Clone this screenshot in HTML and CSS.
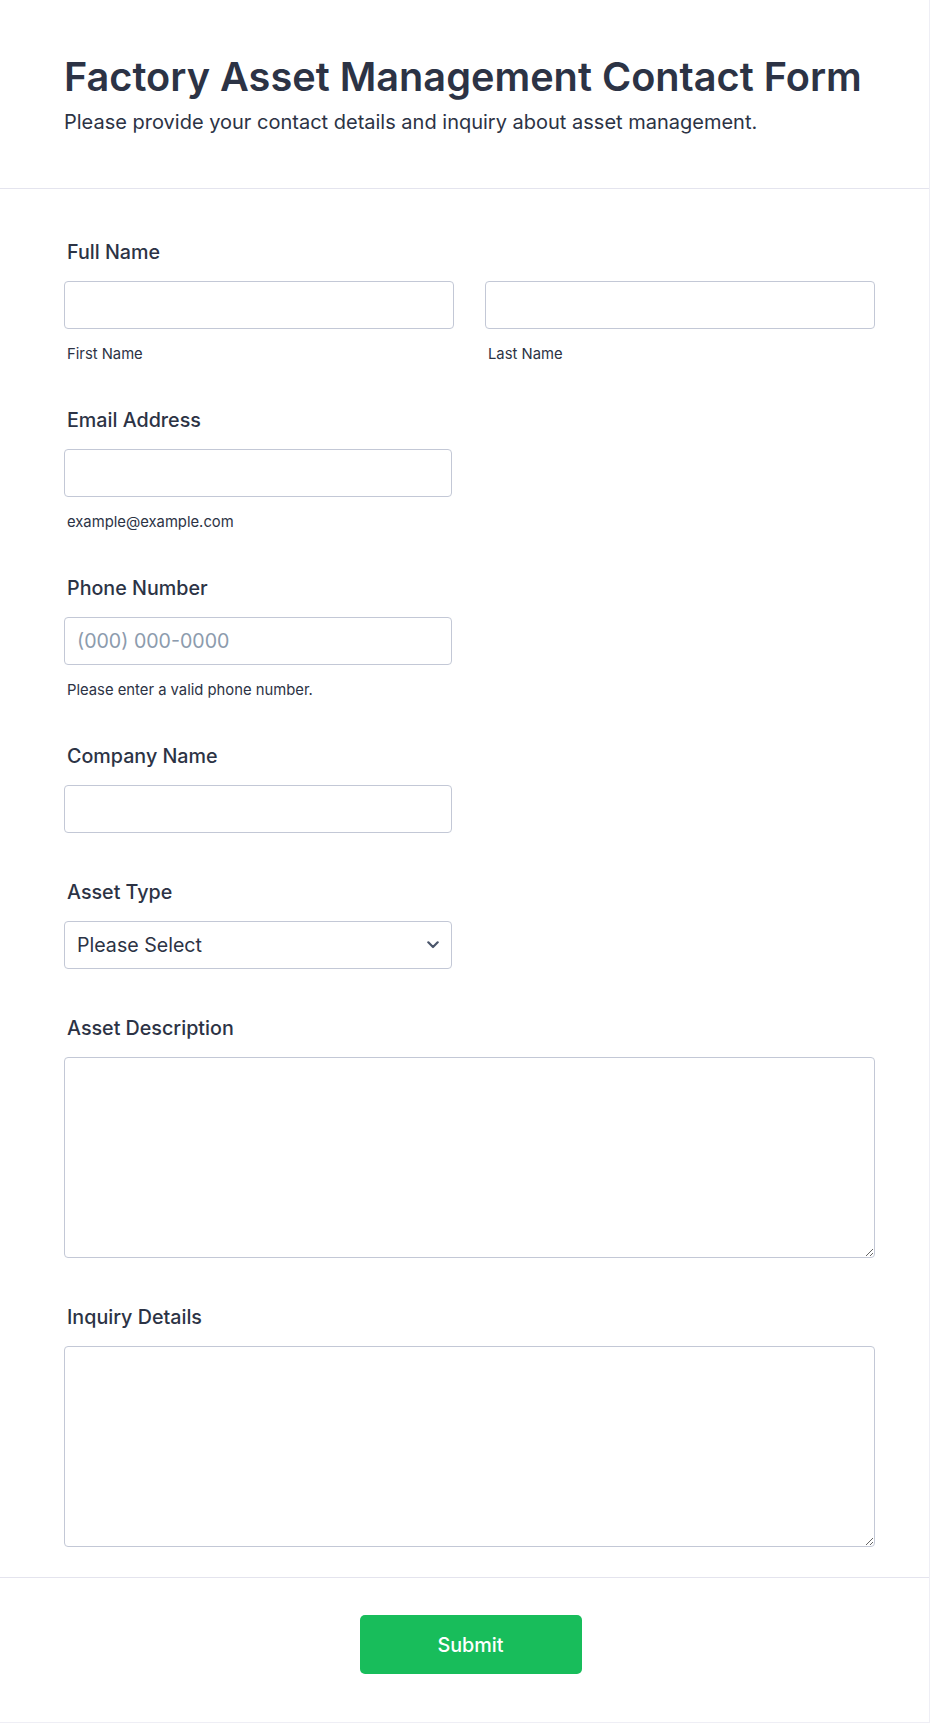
FILE: index.html
```html
<!DOCTYPE html>
<html lang="en">
<head>
<meta charset="utf-8">
<title>Factory Asset Management Contact Form</title>
<link rel="stylesheet" href="styles.css">
</head>
<body>
<div class="page">
  <header class="header">
    <h1 class="title">Factory Asset Management Contact Form</h1>
    <p class="subtitle">Please provide your contact details and inquiry about asset management.</p>
  </header>
  <form class="form">
    <div class="fields">
      <div class="field with-sub">
        <label class="label">Full Name</label>
        <div class="name-row">
          <div class="name-col">
            <input class="input" type="text">
            <span class="sublabel">First Name</span>
          </div>
          <div class="name-col">
            <input class="input" type="text">
            <span class="sublabel">Last Name</span>
          </div>
        </div>
      </div>
      <div class="field with-sub">
        <label class="label">Email Address</label>
        <input class="input half" type="email">
        <span class="sublabel">example@example.com</span>
      </div>
      <div class="field with-sub">
        <label class="label">Phone Number</label>
        <input class="input half" type="tel" placeholder="(000) 000-0000">
        <span class="sublabel">Please enter a valid phone number.</span>
      </div>
      <div class="field">
        <label class="label">Company Name</label>
        <input class="input half" type="text">
      </div>
      <div class="field">
        <label class="label">Asset Type</label>
        <div class="select-wrap half">
          <select class="select">
            <option>Please Select</option>
          </select>
          <svg class="chevron" width="12" height="8" viewBox="0 0 12 8" aria-hidden="true">
            <path d="M1.3 1.3 L6 6 L10.7 1.3" fill="none" stroke="#4b566b" stroke-width="2.2" stroke-linecap="round" stroke-linejoin="round"/>
          </svg>
        </div>
      </div>
      <div class="field">
        <label class="label">Asset Description</label>
        <textarea class="textarea"></textarea>
      </div>
      <div class="field last">
        <label class="label">Inquiry Details</label>
        <textarea class="textarea"></textarea>
      </div>
    </div>
    <div class="footer">
      <button class="submit" type="button">Submit</button>
    </div>
  </form>
</div>
</body>
</html>
```
FILE: styles.css
```css
* {
  box-sizing: border-box;
}

html, body {
  margin: 0;
  padding: 0;
  background: #ffffff;
}

body {
  font-family: Inter, "Noto Sans", "Liberation Sans", sans-serif;
  color: #2c3345;
}

.page {
  width: 930px;
  border-right: 1px solid #eeeef5;
  border-bottom: 1px solid #eeeef5;
}

.header {
  padding: 53px 54px 51px 64px;
  border-bottom: 1px solid #e4e4ee;
}

.title {
  margin: 0;
  font-size: 39.7px;
  line-height: 48px;
  font-weight: 600;
  color: #2c3345;
}

.subtitle {
  margin: 6px 0 0;
  font-size: 20px;
  line-height: 30px;
  font-weight: 400;
  color: #2c3345;
}

.form {
  margin: 0;
}

.fields {
  padding: 51px 54px 30px 64px;
  display: flex;
  flex-direction: column;
}

.field {
  display: flex;
  flex-direction: column;
  align-items: flex-start;
  margin-bottom: 47px;
}

.field.with-sub {
  margin-bottom: 43px;
}

.field.last {
  margin-bottom: 0;
}

.label {
  display: block;
  padding-left: 3px;
  font-size: 19.7px;
  line-height: 24px;
  font-weight: 500;
  margin-bottom: 17px;
  color: #2c3345;
}

.name-row {
  width: 100%;
  display: grid;
  grid-template-columns: 1fr 1fr;
  column-gap: 31px;
}

.name-col {
  display: flex;
  flex-direction: column;
}

.input,
.select,
.textarea {
  font-family: Inter, "Noto Sans", "Liberation Sans", sans-serif;
  font-size: 19.6px;
  color: #2c3345;
  background: #ffffff;
  border: 1px solid #c3c8d6;
  border-radius: 4px;
  outline: none;
  margin: 0;
}

.input {
  width: 100%;
  height: 48px;
  padding: 0 12px;
}

.input.half,
.select-wrap.half {
  width: 388px;
}

.input::placeholder {
  color: #8c9bad;
  opacity: 1;
}

.sublabel {
  display: block;
  padding-left: 3px;
  margin-top: 15px;
  font-size: 14.8px;
  line-height: 21px;
  color: #2c3345;
}

.select-wrap {
  position: relative;
  height: 48px;
}

.select {
  width: 100%;
  height: 48px;
  padding: 0 40px 0 12px;
  appearance: none;
  -webkit-appearance: none;
}

.chevron {
  position: absolute;
  right: 13px;
  top: 20px;
  pointer-events: none;
}

.textarea {
  width: 100%;
  height: 201px;
  padding: 10px 12px;
  resize: vertical;
  display: block;
}

.footer {
  border-top: 1px solid #e4e4ee;
  padding: 37px 52px 48px 64px;
  display: flex;
  justify-content: center;
}

.submit {
  width: 222px;
  height: 59px;
  border: none;
  border-radius: 5px;
  background: #18bd5b;
  color: #ffffff;
  font-family: Inter, "Noto Sans", "Liberation Sans", sans-serif;
  font-size: 19.8px;
  font-weight: 500;
  cursor: pointer;
}
```
